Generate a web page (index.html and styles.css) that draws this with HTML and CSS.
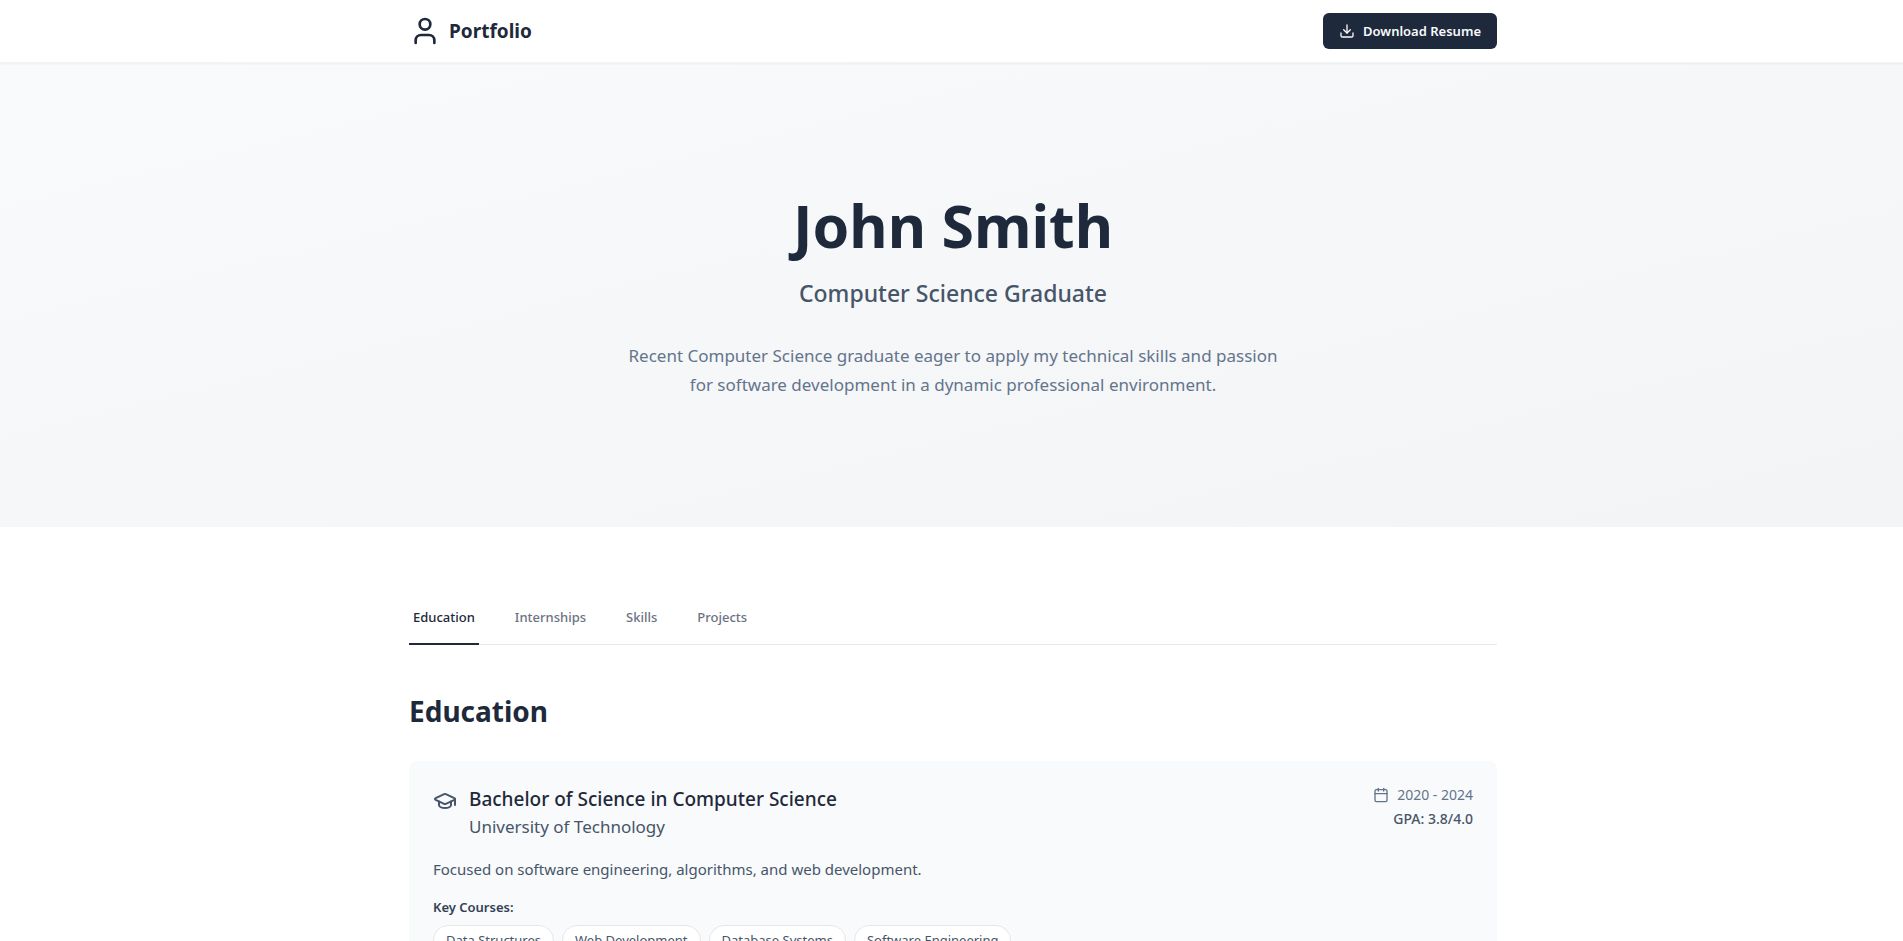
FILE: index.html
```html
<!DOCTYPE html>
<html lang="en">
<head>
<meta charset="utf-8">
<meta name="viewport" content="width=device-width, initial-scale=1">
<title>John Smith - Portfolio</title>
<link rel="stylesheet" href="styles.css">
</head>
<body>
<header class="site-header">
  <div class="container header-row">
    <a class="brand" href="#">
      <svg class="icon icon-brand" viewBox="0 0 24 24" aria-hidden="true"><path d="M19 21v-2a4 4 0 0 0-4-4H9a4 4 0 0 0-4 4v2"/><circle cx="12" cy="7" r="4"/></svg>
      <span>Portfolio</span>
    </a>
    <button class="download" type="button">
      <svg class="icon icon-small" viewBox="0 0 24 24" aria-hidden="true"><path d="M21 15v4a2 2 0 0 1-2 2H5a2 2 0 0 1-2-2v-4"/><path d="M7 10l5 5 5-5"/><path d="M12 15V3"/></svg>
      <span>Download Resume</span>
    </button>
  </div>
</header>
<section class="hero">
  <div class="container hero-inner">
    <h1 class="hero-name">John Smith</h1>
    <p class="hero-role">Computer Science Graduate</p>
    <p class="hero-text">Recent Computer Science graduate eager to apply my technical skills and passion<br>for software development in a dynamic professional environment.</p>
  </div>
</section>
<main class="container content">
  <nav class="tabs" role="tablist">
    <button class="tab tab-active" type="button" role="tab" aria-selected="true">Education</button>
    <button class="tab" type="button" role="tab">Internships</button>
    <button class="tab" type="button" role="tab">Skills</button>
    <button class="tab" type="button" role="tab">Projects</button>
  </nav>
  <section>
    <h2 class="section-title">Education</h2>
    <article class="card">
      <div class="card-head">
        <div class="degree">
          <svg class="icon icon-degree" viewBox="0 0 24 24" aria-hidden="true"><path d="M21.42 10.922a1 1 0 0 0-.019-1.838L12.83 5.18a2 2 0 0 0-1.66 0L2.6 9.08a1 1 0 0 0 0 1.832l8.57 3.908a2 2 0 0 0 1.66 0z"/><path d="M22 10v6"/><path d="M6 12.5V16a6 3 0 0 0 12 0v-3.500"/></svg>
          <div>
            <h3 class="degree-title">Bachelor of Science in Computer Science</h3>
            <p class="school">University of Technology</p>
          </div>
        </div>
        <div class="facts">
          <div class="dates">
            <svg class="icon icon-small" viewBox="0 0 24 24" aria-hidden="true"><path d="M8 2v4"/><path d="M16 2v4"/><rect width="18" height="18" x="3" y="4" rx="2"/><path d="M3 10h18"/></svg>
            <span>2020 - 2024</span>
          </div>
          <p class="gpa">GPA: 3.8/4.0</p>
        </div>
      </div>
      <p class="summary">Focused on software engineering, algorithms, and web development.</p>
      <h4 class="courses-title">Key Courses:</h4>
      <ul class="courses">
        <li class="chip">Data Structures</li>
        <li class="chip">Web Development</li>
        <li class="chip">Database Systems</li>
        <li class="chip">Software Engineering</li>
      </ul>
    </article>
  </section>
</main>
</body>
</html>
```
FILE: styles.css
```css
* { box-sizing: border-box; margin: 0; padding: 0; }
html { overflow: hidden; }
body { font-family: "Segoe UI", "Noto Sans", sans-serif; font-size: 15px; line-height: 24px; color: #1e293b; background: #fff; }
button { font: inherit; border: 0; background: none; cursor: pointer; }
.container { max-width: 1155px; margin: 0 auto; padding: 0 32px 0 35px; }
.icon { flex: none; fill: none; stroke: currentColor; stroke-width: 2; stroke-linecap: round; stroke-linejoin: round; }
.icon-brand { width: 32px; height: 32px; }
.icon-small { width: 16px; height: 16px; }
.icon-degree { width: 24px; height: 24px; margin-top: 4px; color: #475569; }

.site-header { border-bottom: 1px solid #f3f4f6; box-shadow: 0 1px 2px rgba(0, 0, 0, .05); position: relative; }
.header-row { display: flex; align-items: center; justify-content: space-between; height: 62px; }
.brand { display: flex; align-items: center; gap: 8px; color: inherit; text-decoration: none; font-size: 19px; font-weight: 700; }
.download { display: flex; align-items: center; gap: 8px; height: 36px; padding: 0 16px; border-radius: 6px; background: #1e293b; color: #f8fafc; font-size: 13px; font-weight: 600; }

.hero { background: linear-gradient(to bottom right, #f8fafc, #f3f4f6); }
.hero-inner { padding-top: 130px; padding-bottom: 128px; text-align: center; }
.hero-name { font-size: 59px; line-height: 64px; font-weight: 700; margin-bottom: 20px; }
.hero-role { font-size: 23px; line-height: 32px; font-weight: 500; color: #475569; margin-bottom: 32px; }
.hero-text { font-size: 17px; line-height: 29px; color: #64748b; }

.content { padding-top: 64px; padding-bottom: 64px; }
.tabs { display: flex; gap: 32px; border-bottom: 1px solid #e5e7eb; margin-bottom: 48px; }
.tab { padding: 16px 4px; margin-bottom: -1px; border-bottom: 2px solid transparent; font-size: 13px; line-height: 20px; font-weight: 500; color: #6b7280; }
.tab-active { color: #1e293b; border-color: #1e293b; }
.section-title { font-size: 28px; line-height: 36px; font-weight: 700; margin-bottom: 32px; }
.card { padding: 24px; border-radius: 8px; background: #f8fafc; }
.card-head { display: flex; justify-content: space-between; margin-bottom: 16px; }
.degree { display: flex; gap: 12px; }
.degree-title { font-size: 19px; line-height: 28px; font-weight: 500; }
.school { font-size: 17px; line-height: 28px; color: #475569; }
.facts { font-size: 14px; text-align: right; }
.dates { display: flex; align-items: center; justify-content: flex-end; gap: 8px; line-height: 20px; color: #64748b; }
.gpa { line-height: 20px; margin-top: 4px; font-weight: 500; color: #475569; }
.summary { margin-bottom: 16px; color: #475569; }
.courses-title { font-size: 13px; line-height: 20px; font-weight: 600; color: #334155; margin-bottom: 8px; }
.courses { display: flex; flex-wrap: wrap; gap: 8px; list-style: none; }
.chip { padding: 4px 12px; border: 1px solid #e5e7eb; border-radius: 15px; background: #fff; font-size: 13px; line-height: 20px; color: #475569; }
```
